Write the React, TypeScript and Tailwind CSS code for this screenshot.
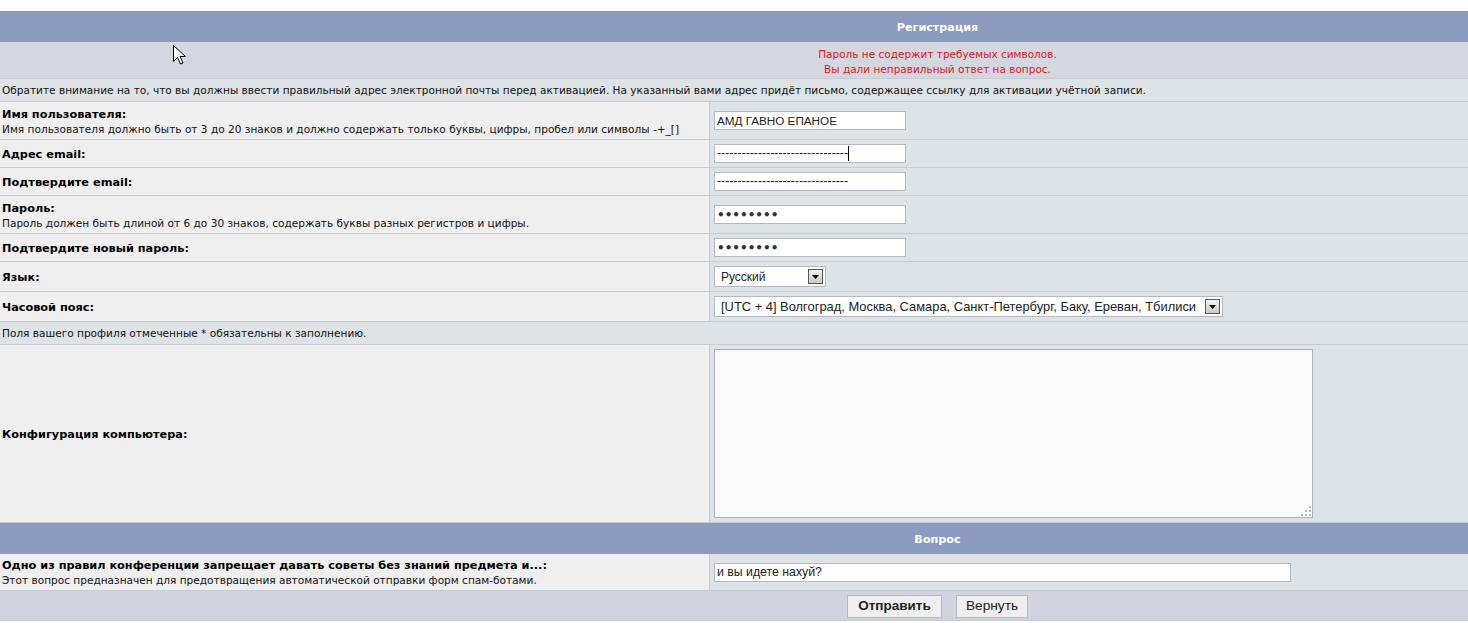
import React from "react"

const labelFont = "font-['DejaVu_Sans',Verdana,sans-serif]"
const inputFont = "font-['Liberation_Sans',Arial,sans-serif]"

function Header({ title }: { title: string }) {
  return (
    <div className={`h-[31px] pt-[3px] bg-[#8B9CC0] flex items-center justify-center text-white font-bold text-[11.2px] ${labelFont}`}>
      {title}
    </div>
  )
}

function TextBox({
  value,
  width,
  caret,
  dots,
  size = "text-[12.3px]",
}: {
  value: string
  width: number
  caret?: boolean
  dots?: boolean
  size?: string
}) {
  return (
    <div
      className="h-[19px] bg-white border border-[#B2B9C3] flex items-center pl-[2px] overflow-hidden"
      style={{ width }}
    >
      <span
        className={
          dots
            ? "font-['DejaVu_Sans',sans-serif] font-bold text-[12px] text-[#333] leading-none"
            : `${inputFont} ${size} text-[#222] leading-none whitespace-nowrap`
        }
      >
        {value}
      </span>
      {caret && <span className="w-px h-[15px] bg-black" />}
    </div>
  )
}

function SelectBox({ value, width, size }: { value: string; width: number; size: string }) {
  return (
    <div
      className="h-[21px] bg-white border border-[#B2B9C3] flex items-center justify-between pl-[6px] pr-[2px]"
      style={{ width }}
    >
      <span className={`${inputFont} ${size} text-[#222] whitespace-nowrap`}>{value}</span>
      <span className="w-[15px] h-[15px] border border-[#555] bg-gradient-to-b from-[#f4f4f4] to-[#c9c9c9] flex items-center justify-center">
        <svg width="7" height="4" viewBox="0 0 7 4">
          <path d="M0 0h7L3.5 4z" fill="#000" />
        </svg>
      </span>
    </div>
  )
}

function Row({
  height,
  label,
  desc,
  children,
}: {
  height: number
  label: string
  desc?: string
  children: React.ReactNode
}) {
  return (
    <div className="flex border-b border-[#C6CCD4]" style={{ height }}>
      <div className={`w-[710px] shrink-0 bg-[#EFEFEF] border-r border-[#C6CCD4] flex flex-col justify-center pl-[2px] pt-[2px] ${labelFont}`}>
        <div className="text-[11.3px] font-bold text-black leading-[14px]">{label}</div>
        {desc && <div className="text-[10.55px] text-[#111] leading-[14px]">{desc}</div>}
      </div>
      <div className="flex-1 bg-[#DEE3E7] flex items-center pl-[4px]">{children}</div>
    </div>
  )
}

function NoteRow({ text }: { text: string }) {
  return (
    <div className={`h-[23px] pt-[1px] bg-[#DEE3E7] border-b border-[#C6CCD4] flex items-center pl-[2px] text-[10.55px] text-[#111] ${labelFont}`}>
      {text}
    </div>
  )
}

export default function App() {
  return (
    <div className="relative w-full h-[623px] overflow-hidden bg-white pt-[11px]">
      <div className="w-[1875px]">
        <Header title="Регистрация" />

        <div className={`h-[37px] pt-[3px] bg-[#D5D7E0] border-b border-[#C6CCD4] flex flex-col items-center justify-center text-[10.5px] text-[#E5141C] leading-[15px] ${labelFont}`}>
          <div>Пароль не содержит требуемых символов.</div>
          <div>Вы дали неправильный ответ на вопрос.</div>
        </div>

        <NoteRow text="Обратите внимание на то, что вы должны ввести правильный адрес электронной почты перед активацией. На указанный вами адрес придёт письмо, содержащее ссылку для активации учётной записи." />

        <Row
          height={38}
          label="Имя пользователя:"
          desc="Имя пользователя должно быть от 3 до 20 знаков и должно содержать только буквы, цифры, пробел или символы -+_[]"
        >
          <TextBox value="АМД ГАВНО ЕПАНОЕ" width={192} size="text-[11.7px]" />
        </Row>
        <Row height={28} label="Адрес email:">
          <TextBox value="--------------------------------" width={192} caret />
        </Row>
        <Row height={28} label="Подтвердите email:">
          <TextBox value="--------------------------------" width={192} />
        </Row>
        <Row
          height={38}
          label="Пароль:"
          desc="Пароль должен быть длиной от 6 до 30 знаков, содержать буквы разных регистров и цифры."
        >
          <TextBox value="••••••••" width={192} dots />
        </Row>
        <Row height={28} label="Подтвердите новый пароль:">
          <TextBox value="••••••••" width={192} dots />
        </Row>
        <Row height={30} label="Язык:">
          <SelectBox value="Русский" width={112} size="text-[12px]" />
        </Row>
        <Row height={30} label="Часовой пояс:">
          <SelectBox
            value="[UTC + 4] Волгоград, Москва, Самара, Санкт-Петербург, Баку, Ереван, Тбилиси"
            width={509}
            size="text-[12.9px]"
          />
        </Row>

        <NoteRow text="Поля вашего профиля отмеченные * обязательны к заполнению." />

        <Row height={178} label="Конфигурация компьютера:">
          <div className="relative w-[599px] h-[169px] bg-[#FAFAFA] border border-[#A9B2BD]">
            <svg className="absolute right-[1px] bottom-[1px]" width="10" height="10" viewBox="0 0 10 10">
              <g fill="#B5B5B5">
                <rect x="8" y="0" width="2" height="2" />
                <rect x="4" y="4" width="2" height="2" />
                <rect x="8" y="4" width="2" height="2" />
                <rect x="0" y="8" width="2" height="2" />
                <rect x="4" y="8" width="2" height="2" />
                <rect x="8" y="8" width="2" height="2" />
              </g>
            </svg>
          </div>
        </Row>

        <Header title="Вопрос" />

        <Row
          height={37}
          label="Одно из правил конференции запрещает давать советы без знаний предмета и...:"
          desc="Этот вопрос предназначен для предотвращения автоматической отправки форм спам-ботами."
        >
          <TextBox value="и вы идете нахуй?" width={577} />
        </Row>

        <div className="h-[30px] pt-[2px] bg-[#D1D3DE] border-b border-[#C6CCD4] flex items-center justify-center gap-[14px]">
          <button className={`w-[95px] h-[23px] bg-[#EFEFEF] border border-[#B4BAC4] text-[13.5px] font-bold text-[#222] ${inputFont}`}>
            Отправить
          </button>
          <button className={`w-[72px] h-[23px] bg-[#EFEFEF] border border-[#B4BAC4] text-[13.7px] text-[#222] ${inputFont}`}>
            Вернуть
          </button>
        </div>
      </div>

      {/* mouse pointer */}
      <svg className="absolute left-[173px] top-[45px]" width="14" height="20" viewBox="0 0 14 20">
        <path d="M0.5 0.5v16l4-4 3 6.5 2.5-1-3-6.5h5.5z" fill="#fff" stroke="#000" strokeWidth="1" strokeLinejoin="round" />
      </svg>
    </div>
  )
}
